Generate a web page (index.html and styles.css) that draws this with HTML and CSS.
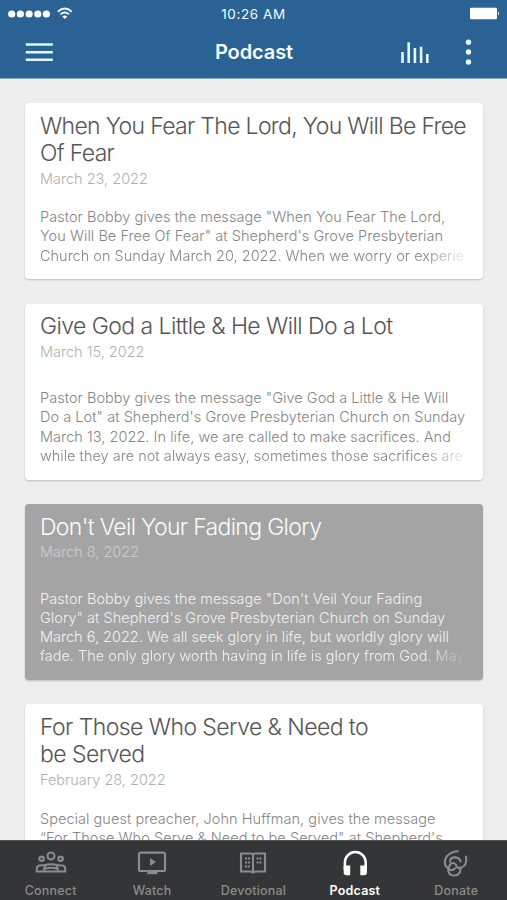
FILE: index.html
```html
<!DOCTYPE html>
<html lang="en">
<head>
<meta charset="utf-8">
<meta name="viewport" content="width=device-width, initial-scale=1">
<title>Podcast</title>
<link rel="stylesheet" href="styles.css">
</head>
<body>
<div class="app">
  <header class="header">
    <div class="status">
      <div class="signal">
        <svg width="66" height="16" viewBox="0 0 66 16" fill="#fff"><circle cx="3.7" cy="8" r="3.6"/><circle cx="12.4" cy="8" r="3.6"/><circle cx="21.1" cy="8" r="3.6"/><circle cx="29.8" cy="8" r="3.6"/><circle cx="38.4" cy="8" r="3.6"/><g fill="none" stroke="#e2f8ff" stroke-width="1.9"><path d="M49.8 5.7q7-6.2 14 0M52.4 8.4q4.4-3.8 8.8 0"/></g><path d="M54.3 10.5q2.5-2 5 0L56.8 13z"/></svg>
      </div>
      <time class="clock">10:26 AM</time>
      <div class="battery"><svg width="30" height="13" viewBox="0 0 30 13" fill="#fff"><rect x="0" y=".8" width="27" height="11.4" rx="1.2"/><path d="M28 4.5q2 2 0 4z"/></svg></div>
    </div>
    <div class="toolbar">
      <svg class="menu" width="28" height="20" viewBox="0 0 28 20" stroke="#e2f8ff" stroke-width="2.5"><path d="M.8 2.6h27M.8 10.2h27M.8 17.700h27"/></svg>
      <h1 class="page-title">Podcast</h1>
      <div class="actions">
        <svg width="28" height="22" viewBox="0 0 28 22" stroke="#e2f8ff" stroke-width="2.6"><path d="M1.5 11v11M7.7 1.300v20.700M13.900 7v15M20.100 5.700v16.300M26.300 13v9"/></svg>
        <svg width="6" height="26" viewBox="0 0 6 26" fill="#e8faff"><circle cx="3.500" cy="3.200" r="2.700"/><circle cx="3.500" cy="13" r="2.700"/><circle cx="3.500" cy="23" r="2.700"/></svg>
      </div>
    </div>
  </header>
  <main class="list">
    <article class="card">
      <h2 class="title tight">When You Fear The Lord, You Will Be Free<br>Of Fear</h2>
      <p class="date">March 23, 2022</p>
      <p class="excerpt">Pastor Bobby gives the message "When You Fear The Lord,<br>You Will Be Free Of Fear" at Shepherd's Grove Presbyterian<br><span class="fade">Church on Sunday March 20, 2022. When we worry or experie</span></p>
    </article>
    <article class="card">
      <h2 class="title">Give God a Little &amp; He Will Do a Lot</h2>
      <p class="date">March 15, 2022</p>
      <p class="excerpt">Pastor Bobby gives the message "Give God a Little &amp; He Will<br>Do a Lot" at Shepherd's Grove Presbyterian Church on Sunday<br>March 13, 2022. In life, we are called to make sacrifices. And<br><span class="fade">while they are not always easy, sometimes those sacrifices are</span></p>
    </article>
    <article class="card pressed">
      <h2 class="title tight">Don't Veil Your Fading Glory</h2>
      <p class="date">March 8, 2022</p>
      <p class="excerpt">Pastor Bobby gives the message "Don't Veil Your Fading<br>Glory" at Shepherd's Grove Presbyterian Church on Sunday<br><span class="snug">March 6, 2022. We all seek glory in life, but worldly glory will</span><br><span class="fade">fade. The only glory worth having in life is glory from God. May</span></p>
    </article>
    <article class="card last">
      <h2 class="title">For Those Who Serve &amp; Need to<br>be Served</h2>
      <p class="date">February 28, 2022</p>
      <p class="excerpt">Special guest preacher, John Huffman, gives the message<br>“For Those Who Serve &amp; Need to be Served" at Shepherd's</p>
    </article>
  </main>
  <nav class="tabs">
    <a class="tab"><svg width="32" height="28" viewBox="0 0 32 28" fill="none" stroke="currentColor" stroke-width="2.100"><circle cx="16" cy="6" r="3.500"/><circle cx="6.600" cy="8.800" r="2.200"/><circle cx="25.600" cy="8.800" r="2.200"/><path d="M1.800 21.500v-3q0-3.300 5-3.300h3q2-1 6.200-1t6.200 1h3q5 0 5 3.300v3zM9 21.500q-.3-3.500 1.500-6M23 21.500q.3-3.500-1.500-6M10 18.500q6-1.500 12 0"/></svg><span>Connect</span></a>
    <a class="tab"><svg width="32" height="28" viewBox="0 0 32 28" fill="none" stroke="currentColor" stroke-width="2.200"><rect x="3" y="2.700" width="26" height="18.300" rx="1.500"/><path d="M11.500 22.700h10" stroke-width="3"/><path d="m14 8 6 4-6 4z" fill="currentColor" stroke="none"/></svg><span>Watch</span></a>
    <a class="tab"><svg width="32" height="28" viewBox="0 0 32 28" fill="none" stroke="currentColor" stroke-width="2.100"><path d="M4 3.500h8.500q3.500 0 3.500 1 0-1 3.500-1H28V21.500h-8.500q-3.500 0-3.500 2 0-2-3.500-2H4zM16 4.500v19"/><path d="M8 8.500h5M8 12.500h5M8 16.500h5M19.500 8.500h5M19.500 12.500h5" stroke-dasharray="2 .8 3"/></svg><span>Devotional</span></a>
    <a class="tab active"><svg width="32" height="28" viewBox="0 0 32 28" fill="none" stroke="currentColor" stroke-width="2.500"><path d="M5.900 20v-7.500a10.400 10.400 0 0 1 20.800 0V20"/><path d="M4.700 15.500h6.500v9.700H7.500q-2.800 0-2.800-2.700zM21.300 15.500h6.600v7q0 2.700-2.800 2.700h-3.800z" fill="currentColor" stroke="none"/></svg><span>Podcast</span></a>
    <a class="tab"><svg width="32" height="28" viewBox="0 0 32 28" fill="none" stroke="currentColor" stroke-width="2.100" stroke-linecap="round"><path d="M18 1.200C10 1.500 4.800 6.500 4.800 12.500q0 3.500 3.200 6M26 6.500c1 6-.5 10-5.500 11.500-2.500.5-4-1-4.500-3M10 11.500c.5-5.500 9-5.500 10.500 0M9.500 16c.5-3.500 5-4 6.500-1M9.500 16c-3 5 0 10 5 9.500 5-.5 7-4.500 5.500-8M10 19.800q3 1 5-1.500"/></svg><span>Donate</span></a>
  </nav>
</div>
</body>
</html>
```
FILE: styles.css
```css
* { box-sizing: border-box; }
body { margin: 0; font-family: Inter, "Liberation Sans", sans-serif; background: #eee; }
h1, h2, p { margin: 0; font-weight: inherit; }
svg { display: block; overflow: visible; }
.app { height: 900px; display: flex; flex-direction: column; overflow: hidden; }
.header { flex: none; height: 79px; background: #2a6393; color: #f0fcff; border-bottom: 1px solid #88a9c4; }
.status { height: 27px; padding: 0 7px 0 8px; display: grid; grid-template-columns: 1fr auto 1fr; align-items: center; }
.clock { font-size: 13.500px; letter-spacing: .6px; margin-right: 1px; }
.battery { justify-self: end; }
.toolbar { height: 50px; padding: 0 36px 0 25px; display: grid; grid-template-columns: 1fr auto 1fr; align-items: center; }
.page-title { font-size: 20px; font-weight: 600; letter-spacing: -.1px; line-height: 24px; margin-left: 12px; }
.actions { display: flex; justify-content: flex-end; align-items: center; gap: 36px; }
.list { flex: 1; min-height: 0; overflow: hidden; padding: 24.400px 24.500px 0 25px; display: flex; flex-direction: column; gap: 24.300px; }
.card { flex: none; height: 176px; padding: 9.600px 0 14.600px 15px; border-radius: 4px; background: #fff; box-shadow: 0 1px 2px rgba(0,0,0,.2); color: #858585; display: flex; flex-direction: column; white-space: nowrap; }
.last { height: 157.500px; }
.title { font-size: 23px; line-height: 27.500px; font-weight: 300; letter-spacing: -.57px; color: #555; }
.tight { letter-spacing: -.68px; }
.date { font-size: 14.500px; line-height: 19px; margin-top: 1px; font-weight: 300; color: #b0b0b0; }
.excerpt { margin-top: auto; font-size: 14.500px; line-height: 19.200px; font-weight: 300; letter-spacing: .045px; }
.snug { letter-spacing: 0; }
.fade { display: inline-block; width: 428px; overflow: hidden; vertical-align: top; letter-spacing: 0; -webkit-mask-image: linear-gradient(90deg, #000 385px, transparent 430px); mask-image: linear-gradient(90deg, #000 385px, transparent 430px); }
.pressed { background: #a4a4a4; color: #f0f0f0; }
.pressed .title { color: #fafafa; }
.pressed .date { color: #ccc; }
.tabs { flex: none; height: 60px; background: #343536; border-top: 1px solid #555; display: grid; grid-template-columns: repeat(5, 1fr); color: #8b8b8b; }
.tab { display: flex; flex-direction: column; align-items: center; padding-top: 9px; font-size: 12.500px; line-height: 16px; font-weight: 500; letter-spacing: .2px; }
.tab span { margin-top: 5px; }
.active { color: #fff; font-weight: 600; }
```
